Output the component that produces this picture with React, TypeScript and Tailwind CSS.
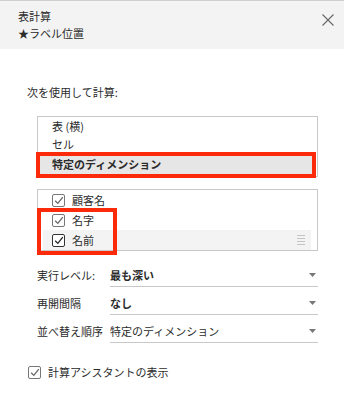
import React from "react";

const RED = "border-[#fa2a0a]";

function Check({ dark = false }: { dark?: boolean }) {
    return (
        <span
            className={`flex h-[13px] w-[13px] shrink-0 items-center justify-center rounded-[2px] border bg-white ${
                dark ? "border-[#333]" : "border-[#777]"
            }`}
        >
            <svg width="10" height="9" viewBox="0 0 10 9" fill="none">
                <path
                    d="M1.2 4.8 L3.8 7.4 L8.8 1.2"
                    stroke={dark ? "#222" : "#666"}
                    strokeWidth="1.3"
                />
            </svg>
        </span>
    );
}

function Caret() {
    return (
        <svg width="7" height="4" viewBox="0 0 7 4" className="mr-[2px]">
            <path d="M0 0 H7 L3.5 4 Z" fill="#777" />
        </svg>
    );
}

const settings = [
    { label: "実行レベル:", value: "最も深い", bold: true },
    { label: "再開間隔", value: "なし", bold: true },
    { label: "並べ替え順序", value: "特定のディメンション", bold: false },
];

export default function App() {
    return (
        <div className="h-[409px] w-[344px] bg-white font-['Noto_Sans_CJK_JP',sans-serif] text-[11px] text-[#2b2b2b]">
            {/* Header */}
            <div className="flex h-[49px] justify-between border-t border-[#cfcfcf] bg-[#f3f3f3] pl-[18px] pr-[10px]">
                <div className="pt-[7px] leading-[17px]">
                    <div>表計算</div>
                    <div>★ラベル位置</div>
                </div>
                <svg width="12" height="12" viewBox="0 0 12 12" className="mt-[13px]">
                    <path d="M0.5 0.5 L11.5 11.5 M11.5 0.5 L0.5 11.5" stroke="#666" strokeWidth="1.1" />
                </svg>
            </div>

            <div className="pl-[27px]">
                <p className="mt-[35px] leading-[17px]">次を使用して計算:</p>

                {/* Addressing list */}
                <div className="relative ml-[10px] mt-[15px] w-[281px] border border-[#c8c8c8] pb-[1px] leading-[17px]">
                    <div className="flex h-[18px] items-center pl-[14px]">表 (横)</div>
                    <div className="flex h-[18px] items-center pl-[14px]">セル</div>
                    <div className="mr-[2px] flex h-[22px] items-center bg-[#e6e6e6] pl-[14px] font-bold">
                        特定のディメンション
                    </div>
                    <div className={`absolute left-[-2px] top-[35px] h-[26px] w-[280px] border-4 ${RED}`} />
                </div>

                {/* Dimensions */}
                <div className="relative ml-[10px] mt-[12px] w-[281px] border border-[#c8c8c8] leading-[17px]">
                    {["顧客名", "名字"].map((name) => (
                        <div key={name} className="ml-[5px] mr-[6px] flex h-[20px] items-center gap-[7px] pl-[9px]">
                            <Check />
                            <span>{name}</span>
                        </div>
                    ))}
                    <div className="ml-[5px] mr-[6px] flex h-[20px] items-center gap-[7px] bg-[#f3f3f3] pl-[9px]">
                        <Check dark />
                        <span className="flex-1">名前</span>
                        <span className="mr-[6px] flex w-[8px] flex-col gap-[2px]">
                            <span className="h-px bg-[#c4c4c4]" />
                            <span className="h-px bg-[#c4c4c4]" />
                            <span className="h-px bg-[#c4c4c4]" />
                            <span className="h-px bg-[#c4c4c4]" />
                        </span>
                    </div>
                    <div className={`absolute left-[-1px] top-[18px] h-[47px] w-[80px] border-4 ${RED}`} />
                </div>

                {/* Settings */}
                <div className="ml-[10px] mt-[8px] w-[281px]">
                    {settings.map((s) => (
                        <div key={s.label} className="flex h-[28px]">
                            <div className="flex w-[73px] items-center pb-[1px] pt-[5px]">{s.label}</div>
                            <div className="flex flex-1 items-center justify-between border-b border-[#c8c8c8] pt-[5px]">
                                <span className={s.bold ? "font-bold" : ""}>{s.value}</span>
                                <Caret />
                            </div>
                        </div>
                    ))}
                </div>

                <div className="ml-[1px] mt-[21px] flex h-[17px] items-center gap-[7px]">
                    <Check />
                    <span>計算アシスタントの表示</span>
                </div>
            </div>
        </div>
    );
}
